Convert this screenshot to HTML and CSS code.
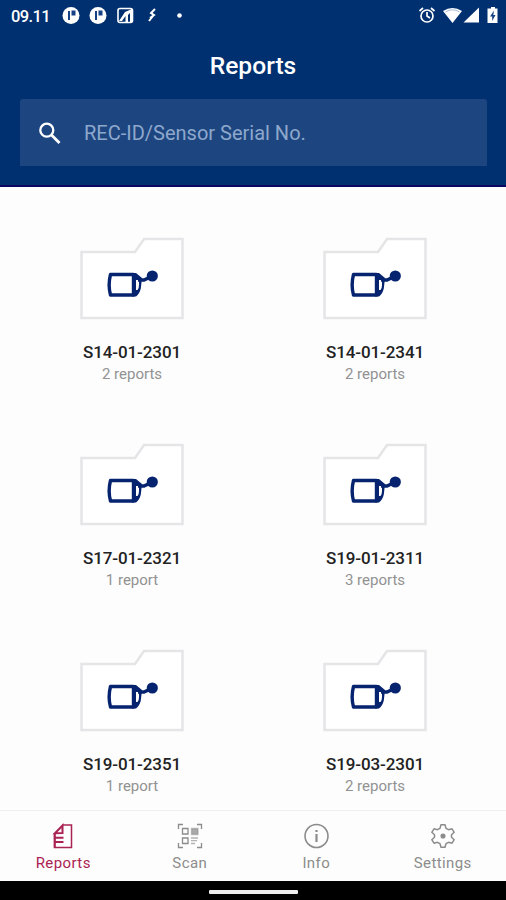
FILE: index.html
```html
<!DOCTYPE html>
<html lang="en">
<head>
<meta charset="utf-8">
<title>Reports</title>
<link rel="stylesheet" href="styles.css">
</head>
<body>
<svg class="defs" width="0" height="0">
  <symbol id="folder" viewBox="0 0 104 82">
    <path d="M1.500 14.500H55L64 1.500H102.500V80.500H1.500Z" fill="#fff" stroke="#e5e5e7" stroke-width="2.500"/>
    <path d="M30.500 37H53.500V57.500H30.500Q27.800 47.500 30.500 37Z" fill="#fff" stroke="#05236f" stroke-width="3.400" stroke-linejoin="round"/>
    <path d="M52 35.400H56L62 40.500L60.800 51Q59.500 56.500 56 59H52ZM56 42.500V52.500H57.500Q59 51 59 47.500V42.500Z" fill="#05236f" fill-rule="evenodd"/>
    <path d="M58 42.500H64L72 38.700" fill="none" stroke="#05236f" stroke-width="3.400"/>
    <circle cx="72.300" cy="38.500" r="5.600" fill="#05236f"/>
  </symbol>
</svg>
<header class="header">
  <div class="status">
    <span class="time">09.11</span>
    <svg class="notifications" width="120" height="20" viewBox="0 0 120 20">
      <g fill="#fff"><circle cx="9" cy="9.500" r="8.500"/><circle cx="36" cy="9.500" r="8.500"/></g>
      <g fill="#164184"><path d="M6 5h2v9H6zM9.500 4.500h4v5H9.500zM33 5h2v9h-2zM36.500 4.500h4v5h-4z"/></g>
      <rect x="56" y="2.500" width="14.500" height="14" rx="2" fill="none" stroke="#fff" stroke-width="1.600"/>
      <path d="M57 15L63 6L70 3V16H68V7L66 9V16H63.500V10L60 15Z" fill="#fff"/>
      <path d="M93 3L89 7L92 9L88 12M91 10L87 15" fill="none" stroke="#fff" stroke-width="2"/>
      <circle cx="117.500" cy="9.500" r="2.300" fill="#fff"/>
    </svg>
    <svg class="system" width="82" height="20" viewBox="0 0 82 20">
      <g transform="translate(2)" fill="none" stroke="#fff" stroke-width="1.700"><circle cx="9" cy="10" r="6"/><path d="M1.500 5L5 2M13 2L16.500 5M9 6V10L12 12"/></g>
      <g transform="translate(2)"><path d="M25 5Q34.500-1 44 5L34.500 17Z" fill="#fff"/>
      <path d="M27.500 6Q34.500 1.500 41.500 6" fill="none" stroke="#8fa8cc" stroke-width=".8"/>
      <path d="M61 1.500V16.500H45.500Z" fill="#fff"/></g>
      <g transform="translate(2)"><path d="M71 2.500H73V1H77V2.500H79.500V17H69.500V2.500Z" fill="#fff"/>
      <path d="M76 4.500L72 10.500H74.200V15L77.500 9H75.300Z" fill="#164184"/></g>
    </svg>
  </div>
  <h1 class="title">Reports</h1>
  <div class="search">
    <svg width="24" height="24" viewBox="0 0 24 24"><circle cx="9.800" cy="9.200" r="6.500" fill="none" stroke="#fff" stroke-width="2.300"/><path d="M14.500 14L22.500 22" stroke="#fff" stroke-width="2.900"/></svg>
    <span>REC-ID/Sensor Serial No.</span>
  </div>
</header>
<main class="grid">
  <article class="card"><svg class="folder"><use href="#folder"/></svg><h2>S14-01-2301</h2><p>2 reports</p></article>
  <article class="card"><svg class="folder"><use href="#folder"/></svg><h2>S14-01-2341</h2><p>2 reports</p></article>
  <article class="card"><svg class="folder"><use href="#folder"/></svg><h2>S17-01-2321</h2><p>1 report</p></article>
  <article class="card"><svg class="folder"><use href="#folder"/></svg><h2>S19-01-2311</h2><p>3 reports</p></article>
  <article class="card"><svg class="folder"><use href="#folder"/></svg><h2>S19-01-2351</h2><p>1 report</p></article>
  <article class="card"><svg class="folder"><use href="#folder"/></svg><h2>S19-03-2301</h2><p>2 reports</p></article>
</main>
<nav class="tabs">
  <a class="tab active">
    <svg width="26" height="26" viewBox="0 0 26 26" fill="none" stroke="currentColor"><path d="M12 2H21.500V24.500H4.500V10" stroke-width="1.500"/><path d="M5 10.200L12.500 2.500V10Z M5 14.800H13.500M5 19H13.500" stroke-width="2"/><path d="M4.800 10V24.500" stroke-width="2"/></svg>
    <span>Reports</span>
  </a>
  <a class="tab">
    <svg width="26" height="26" viewBox="0 0 26 26" fill="none" stroke="currentColor" stroke-width="1.300"><path d="M1.500 6V1.500H6M20 1.500H24.500V6M1.500 20V24.500H6M20 24.500H24.500V20"/><path d="M5.500 5.500H11V11H5.500ZM5.500 15H11V20.500H5.500Z"/><path d="M14.500 5.500H21V11.500H14.500Z" fill="currentColor" fill-opacity=".75" stroke-opacity=".5"/><path d="M14 15H21M14 17.700H20M14 20.500H18" stroke-opacity=".65"/></svg>
    <span>Scan</span>
  </a>
  <a class="tab">
    <svg width="26" height="26" viewBox="0 0 26 26" fill="none" stroke="currentColor" stroke-width="1.600"><circle cx="13.500" cy="13" r="11.500"/><path d="M13.500 11V19M13.500 7V9" stroke-width="2.200"/></svg>
    <span>Info</span>
  </a>
  <a class="tab">
    <svg width="26" height="26" viewBox="0 0 26 26" fill="none" stroke="currentColor" stroke-width="1.500" stroke-linejoin="round"><path d="M11 1.800H15L16 5.300L18.500 6.700L22 5.800L24.200 9.300L21.500 11.800V14.200L24.200 16.700L22 20.200L18.500 19.300L16 20.700L15 24.200H11L10 20.700L7.500 19.300L4 20.200L1.800 16.700L4.500 14.200V11.800L1.800 9.300L4 5.800L7.500 6.700L10 5.300Z"/><circle cx="13" cy="13" r="1.800" fill="currentColor"/></svg>
    <span>Settings</span>
  </a>
</nav>
<div class="system-bar"><div class="handle"></div></div>
</body>
</html>
```
FILE: styles.css
```css
* { box-sizing: border-box; }
body {
  margin: 0;
  width: 506px;
  height: 900px;
  overflow: hidden;
  display: flex;
  flex-direction: column;
  background: #fdfdfd;
  font-family: Roboto, "Liberation Sans", sans-serif;
}
.defs { position: absolute; }
.header {
  height: 187px;
  flex: none;
  background: #003070;
  border-bottom: 2px solid #080860;
  color: #fff;
}
.status {
  height: 32px;
  padding: 0 8px 0 11px;
  display: flex;
  align-items: center;
}
.time { width: 51px; font-size: 16.5px; font-weight: 500; letter-spacing: -.6px; }
.system { margin-left: auto; }
.title {
  margin: 17px 0 0;
  height: 34px;
  line-height: 34px;
  text-align: center;
  font-size: 24.6px;
  font-weight: 500;
}
.search {
  margin: 16px 19px 0 20px;
  height: 67px;
  padding-left: 17px;
  display: flex;
  align-items: center;
  gap: 23px;
  border-radius: 3px 3px 0 0;
  background: #1d4680;
  color: #8ea8cd;
  font-size: 20px;
}
.grid {
  flex: 1;
  min-height: 0;
  padding: 50px 0 0 10.5px;
  display: grid;
  grid-template-columns: 243px 243px;
  grid-auto-rows: 206px;
  overflow: hidden;
}
.card { display: flex; flex-direction: column; align-items: center; }
.folder { width: 104px; height: 83px; }
.card h2 {
  margin: 22px 0 0;
  line-height: 20px;
  font-size: 17px;
  font-weight: 500;
  letter-spacing: -.1px;
  color: #222;
}
.card p {
  margin: 2px 0 0;
  line-height: 20px;
  font-size: 15px;
  color: #929292;
}
.tabs {
  height: 71px;
  flex: none;
  display: grid;
  grid-template-columns: repeat(4, 1fr);
  border-top: 1px solid #f0f0f0;
  background: #fdfdfd;
}
.tab {
  padding-top: 12px;
  display: flex;
  flex-direction: column;
  align-items: center;
  gap: 4px;
  color: #8c8c8c;
  font-size: 15px;
  line-height: 20px;
  letter-spacing: .4px;
}
.active { color: #ab2353; }
.system-bar {
  height: 19px;
  flex: none;
  display: flex;
  justify-content: center;
  padding-top: 9px;
  background: #000;
}
.handle { width: 89px; height: 4px; border-radius: 1px; background: #eee; }
```
